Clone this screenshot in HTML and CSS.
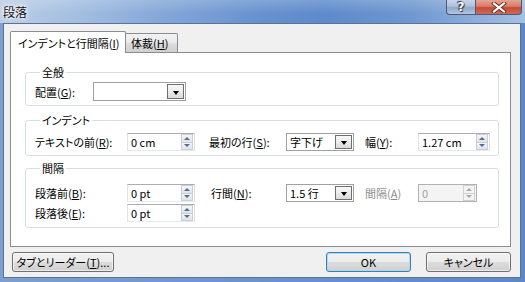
FILE: index.html
```html
<!DOCTYPE html>
<html lang="ja">
<head>
<meta charset="utf-8">
<title>段落</title>
<link rel="stylesheet" href="styles.css">
</head>
<body>
<div class="window">
  <div class="titlebar">
    <span class="title">段落</span>
    <div class="caption-buttons">
      <span class="cbtn help">?</span>
      <span class="cbtn close"><svg width="16" height="11" viewBox="0 0 16 11"><path d="M3 1.5 L13 9.5 M13 1.5 L3 9.5" stroke="#6b2a22" stroke-width="4" stroke-linecap="square"/><path d="M3 1.5 L13 9.5 M13 1.5 L3 9.5" stroke="#fff" stroke-width="2.2" stroke-linecap="square"/></svg></span>
    </div>
  </div>
  <div class="client">
    <div class="tabs">
      <div class="tab active">インデントと行間隔(<u>I</u>)</div>
      <div class="tab">体裁(<u>H</u>)</div>
    </div>
    <div class="panel">
      <fieldset class="group g1">
        <legend>全般</legend>
        <div class="row">
          <span class="lbl l-general">配置(<u>G</u>):</span>
          <div class="combo w-general"><span class="val"></span><span class="drop"></span></div>
        </div>
      </fieldset>
      <fieldset class="group g2">
        <legend>インデント</legend>
        <div class="grid">
          <span class="lbl">テキストの前(<u>R</u>):</span>
          <div class="spin"><span class="val">0 cm</span><span class="arrows"><span class="up"></span><span class="down"></span></span></div>
          <span class="lbl c2">最初の行(<u>S</u>):</span>
          <div class="combo"><span class="val">字下げ</span><span class="drop"></span></div>
          <span class="lbl c3">幅(<u>Y</u>):</span>
          <div class="spin w-width"><span class="val">1.27 cm</span><span class="arrows"><span class="up"></span><span class="down"></span></span></div>
        </div>
      </fieldset>
      <fieldset class="group g3">
        <legend>間隔</legend>
        <div class="grid">
          <span class="lbl">段落前(<u>B</u>):</span>
          <div class="spin"><span class="val">0 pt</span><span class="arrows"><span class="up"></span><span class="down"></span></span></div>
          <span class="lbl c2b">行間(<u>N</u>):</span>
          <div class="combo"><span class="val">1.5 行</span><span class="drop"></span></div>
          <span class="lbl c3 disabled">間隔(<u>A</u>)</span>
          <div class="spin w-at disabled"><span class="val">0</span><span class="arrows"><span class="up"></span><span class="down"></span></span></div>
          <span class="lbl">段落後(<u>E</u>):</span>
          <div class="spin"><span class="val">0 pt</span><span class="arrows"><span class="up"></span><span class="down"></span></span></div>
        </div>
      </fieldset>
    </div>
    <div class="buttons">
      <button class="btn btn-tabs">タブとリーダー(<u>T</u>)...</button>
      <span class="spacer"></span>
      <button class="btn btn-ok default">OK</button>
      <button class="btn btn-cancel">キャンセル</button>
    </div>
  </div>
</div>
</body>
</html>
```

FILE: styles.css
```css
html, body {
  margin: 0;
  padding: 0;
}
body {
  width: 525px;
  height: 282px;
  overflow: hidden;
  font-family: "Noto Sans CJK JP", "Noto Sans", sans-serif;
  font-size: 11px;
  font-feature-settings: "palt" 1;
  color: #000;
}
u { text-decoration: underline; text-underline-offset: 1px; }

.window {
  width: 525px;
  height: 282px;
  display: flex;
  flex-direction: column;
  background: linear-gradient(90deg, #7d9fcf 0%, #6a93cc 50%, #5d88c6 100%);
}

.titlebar {
  height: 23px;
  flex: none;
  display: flex;
  align-items: flex-start;
  padding-left: 3px;
  background:
    linear-gradient(180deg, rgba(255,255,255,0.18) 0%, rgba(255,255,255,0) 60%),
    linear-gradient(90deg, #bccfe6 0%, #a4bfe1 14%, #86a8d9 30%, #6993cf 48%, #5d8acb 62%, #6e97d0 78%, #8fb0dc 92%, #a5c0e3 100%);
}
.title {
  margin-top: 4px;
  font-size: 12px;
  line-height: 15px;
  color: #111;
  text-shadow: 0 0 4px #fff, 0 0 6px #fff, 0 0 2px #fff;
}
.caption-buttons {
  margin-left: auto;
  margin-right: 3px;
  display: flex;
  height: 16px;
}
.cbtn {
  height: 15px;
  display: flex;
  align-items: center;
  justify-content: center;
  border: 1px solid #4a5a78;
  border-top: none;
  box-sizing: border-box;
}
.help {
  width: 29px;
  border-radius: 0 0 0 4px;
  border-right: none;
  background: linear-gradient(180deg, #c9d7ea 0%, #aebfd8 45%, #90a8c9 55%, #b3c6df 100%);
  color: #fff;
  font-family: "DejaVu Sans", sans-serif;
  font-weight: bold;
  font-size: 12px;
  line-height: 14px;
  text-shadow: 0 0 1px #334, 1px 1px 1px #334, -1px -1px 1px #334;
}
.close {
  width: 47px;
  border-radius: 0 0 4px 0;
  background: linear-gradient(180deg, #e4a593 0%, #d77c69 45%, #c54a37 55%, #cf6b55 100%);
}

.client {
  flex: 1;
  margin: 0 4px 4px 3px;
  border: 1px solid #5a7298;
  background: #f0f0f0;
  padding: 7px 9px 5px 6px;
  display: flex;
  flex-direction: column;
}

.tabs {
  height: 21px;
  flex: none;
  display: flex;
  position: relative;
  z-index: 2;
}
.tab {
  box-sizing: border-box;
  border: 1px solid #898c95;
  border-bottom: none;
  line-height: 16px;
  white-space: nowrap;
}
.tab.active {
  align-self: flex-start;
  width: 116px;
  height: 22px;
  background: #fff;
  padding: 3px 0 0 7px;
  border-radius: 2px 2px 0 0;
}
.tab:not(.active) {
  align-self: flex-end;
  width: 52px;
  height: 19px;
  border-left: none;
  padding: 1px 0 0 5px;
  background: linear-gradient(180deg, #f2f2f2 0%, #ebebeb 45%, #dcdcdc 55%, #cfcfcf 100%);
  border-radius: 0 2px 0 0;
}

.panel {
  flex: 1;
  background: #fff;
  border: 1px solid #898c95;
  padding: 11px 11px 0 14px;
}

.group {
  margin: 0;
  padding: 0 0 0 9px;
  border: 1px solid #d5dfe5;
  border-radius: 3px;
  min-inline-size: 0;
}
.group legend {
  margin-left: 5px;
  padding: 0 2px;
  line-height: 16px;
}
.g1 { padding-top: 2px; padding-bottom: 4px; }
.g2 { margin-top: 6px; padding-top: 5px; padding-bottom: 4px; }
.g3 { margin-top: 4px; padding-top: 8px; padding-bottom: 5px; }

.row {
  display: flex;
  align-items: center;
}
.lbl {
  white-space: nowrap;
  line-height: 16px;
}
.l-general { width: 58px; }

.grid {
  display: grid;
  grid-template-columns: 92px 68px 91px 68px 64px auto;
  align-items: center;
  row-gap: 2px;
}
.c2 { padding-left: 14px; }
.c2b { padding-left: 16px; }
.c3 { padding-left: 11px; }

.val {
  flex: 1;
  padding-left: 3px;
  line-height: 16px;
  white-space: nowrap;
  overflow: hidden;
}

.spin, .combo {
  box-sizing: border-box;
  height: 18px;
  display: flex;
  background: #fff;
}
.spin {
  width: 68px;
  border: 1px solid #abadb3;
  border-left-color: #e2e3ea;
  border-right-color: #dbdfe6;
  border-bottom-color: #e3e9ef;
}
.spin.w-width { width: 72px; }
.spin.w-at { width: 59px; }
.arrows {
  width: 12px;
  margin: 0 1px 0 0;
  display: flex;
  flex-direction: column;
}
.arrows span {
  flex: 1;
  display: flex;
  align-items: center;
  justify-content: center;
  border: 1px solid #c9cfd6;
  background: linear-gradient(180deg, #f6f6f6, #e0e3e7);
}
.arrows .down { border-top: none; }
.arrows .up::after {
  content: "";
  border-left: 3px solid transparent;
  border-right: 3px solid transparent;
  border-bottom: 3px solid #4f6d95;
}
.arrows .down::after {
  content: "";
  border-left: 3px solid transparent;
  border-right: 3px solid transparent;
  border-top: 3px solid #4f6d95;
}
.spin.disabled {
  background: #f4f4f4;
  border-color: #adb2b5;
}
.spin.disabled .val { color: #a0a0a0; }
.spin.disabled .arrows span { background: #f4f4f4; border-color: #d0d0d0; }
.spin.disabled .arrows .up::after { border-bottom-color: #a8a8a8; }
.spin.disabled .arrows .down::after { border-top-color: #a8a8a8; }
.lbl.disabled { color: #8d8d8d; }

.combo {
  width: 68px;
  border: 1px solid #a0a0a0;
}
.combo.w-general { width: 93px; height: 19px; }
.drop {
  width: 17px;
  margin: 1px;
  box-sizing: border-box;
  border: 1px solid #6f6f6f;
  background: linear-gradient(180deg, #f8f8f8 0%, #ececec 50%, #dadada 100%);
  display: flex;
  align-items: center;
  justify-content: center;
}
.drop::after {
  content: "";
  margin-top: 2px;
  border-left: 3.5px solid transparent;
  border-right: 3.5px solid transparent;
  border-top: 4px solid #000;
}

.buttons {
  flex: none;
  display: flex;
  margin-top: 5px;
  height: 20px;
}
.spacer { flex: 1; }
.btn {
  font: inherit;
  font-feature-settings: "palt" 1;
  margin: 0;
  padding: 0;
  height: 20px;
  box-sizing: border-box;
  border: 1px solid #707070;
  border-radius: 3px;
  background: linear-gradient(180deg, #f2f2f2 0%, #ebebeb 48%, #dddddd 52%, #cfcfcf 100%);
  box-shadow: inset 0 0 0 1px rgba(255,255,255,0.6);
  color: #000;
  line-height: 16px;
  white-space: nowrap;
}
.btn-tabs { width: 102px; margin-left: 2px; }
.btn-ok { width: 85px; }
.btn-cancel { width: 85px; margin-left: 15px; }
.btn.default {
  border-color: #3c7fb1;
  box-shadow: inset 0 0 0 1px #a8dbf4;
}
```
